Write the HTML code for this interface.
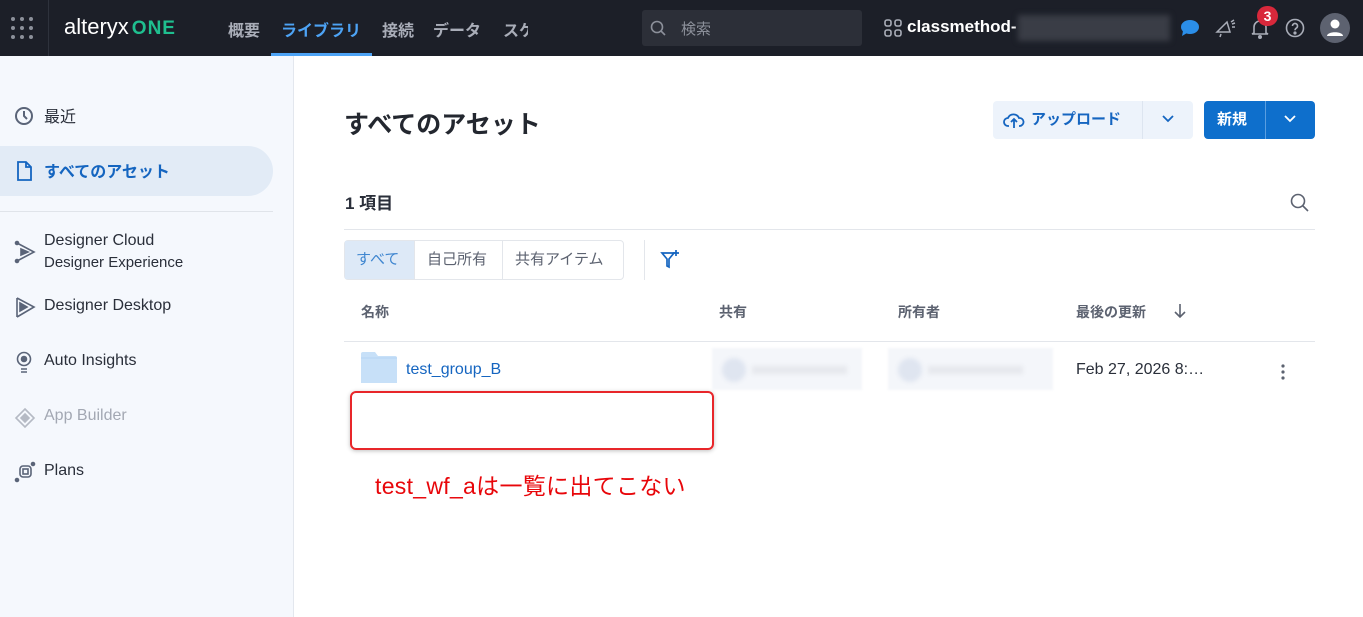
<!DOCTYPE html>
<html><head><meta charset="utf-8"><style>
*{box-sizing:border-box;margin:0;padding:0}
body{width:1363px;height:617px;overflow:hidden;background:#fff;font-family:"Liberation Sans","Noto Sans CJK JP",sans-serif;color:#2a2f3a;position:relative}
.hdr{position:absolute;left:0;top:0;width:1363px;height:56px;background:#1c1f28}
.abs{position:absolute}
.nav{color:#a9adb8;font-size:16px;font-weight:bold;top:17px}
.side{position:absolute;left:0;top:56px;width:294px;height:561px;background:#f5f8fd;border-right:1px solid #e3e7ee}
.si{position:absolute;left:44px;font-size:16px;color:#2a2f3a}
.ic{position:absolute;left:14px}
.th{position:absolute;top:302px;font-size:14px;font-weight:bold;color:#5c6270}
.blur{position:absolute;top:348px;height:42px;background:#f4f6fa;filter:blur(1px)}
</style></head><body>
<div class="hdr">
  <svg class="abs" style="left:10px;top:16px" width="24" height="24"><g fill="#8c909a"><circle cx="3" cy="3" r="2"/><circle cx="12" cy="3" r="2"/><circle cx="21" cy="3" r="2"/><circle cx="3" cy="12" r="2"/><circle cx="12" cy="12" r="2"/><circle cx="21" cy="12" r="2"/><circle cx="3" cy="21" r="2"/><circle cx="12" cy="21" r="2"/><circle cx="21" cy="21" r="2"/></g></svg>
  <div class="abs" style="left:48px;top:0;width:1px;height:56px;background:#2e323c"></div>
  <div class="abs" style="left:64px;top:14px;font-size:22px;color:#fff">alteryx<span style="color:#1fbf8f;font-weight:bold;font-size:19px;letter-spacing:1px;margin-left:3px">ONE</span></div>
  <div class="abs nav" style="left:228px">概要</div>
  <div class="abs nav" style="left:281px;color:#4da3f5">ライブラリ</div>
  <div class="abs" style="left:271px;top:53px;width:101px;height:3px;background:#4da3f5"></div>
  <div class="abs nav" style="left:382px">接続</div>
  <div class="abs nav" style="left:433px">データ</div>
  <div class="abs nav" style="left:503px;width:25px;overflow:hidden;white-space:nowrap">スケ</div>
  <div class="abs" style="left:642px;top:10px;width:220px;height:36px;background:#2c2f38;border-radius:3px"></div>
  <svg class="abs" style="left:650px;top:20px" width="16" height="16" fill="none" stroke="#8c909a" stroke-width="1.6"><circle cx="7" cy="7" r="5.5"/><path d="M11 11l4 4"/></svg>
  <div class="abs" style="left:681px;top:18px;color:#8c909a;font-size:15px">検索</div>
  <svg class="abs" style="left:884px;top:19px" width="18" height="18" fill="none" stroke="#a9adb8" stroke-width="1.6"><rect x="1" y="1" width="6" height="6" rx="2"/><rect x="11" y="1" width="6" height="6" rx="2"/><rect x="1" y="11" width="6" height="6" rx="2"/><rect x="11" y="11" width="6" height="6" rx="2"/></svg>
  <div class="abs" style="left:907px;top:17px;color:#fff;font-weight:bold;font-size:17px">classmethod-</div>
  <div class="abs" style="left:1018px;top:15px;width:152px;height:26px;background:#3a3d46;filter:blur(3px)"></div>
  <svg class="abs" style="left:1180px;top:19px" width="20" height="18"><ellipse cx="10" cy="8" rx="9" ry="7" fill="#2b8ee8"/><path d="M3 12l-1 5 5-3z" fill="#2b8ee8"/></svg>
  <svg class="abs" style="left:1215px;top:18px" width="22" height="20" fill="none" stroke="#a9adb8" stroke-width="1.5"><path d="M2 14l10-10 3 10z"/><path d="M6 16l-1 3M16 4l3-2M17 9h3M17 6l3-1"/></svg>
  <svg class="abs" style="left:1250px;top:17px" width="20" height="22" fill="none" stroke="#a9adb8" stroke-width="1.6"><path d="M4 16V10a6 6 0 0112 0v6l2 1H2z"/><circle cx="10" cy="20" r="1.2" fill="#a9adb8"/></svg>
  <div class="abs" style="left:1257px;top:6px;width:21px;height:20px;border-radius:10px;background:#d8283b;color:#fff;font-weight:bold;font-size:14px;text-align:center;line-height:20px">3</div>
  <svg class="abs" style="left:1285px;top:18px" width="20" height="20" fill="none" stroke="#a9adb8" stroke-width="1.6"><circle cx="10" cy="10" r="8.5"/><path d="M7.5 8a2.5 2.5 0 114 2c-1 .7-1.5 1-1.5 2.3"/><circle cx="10" cy="15" r=".8" fill="#a9adb8"/></svg>
  <div class="abs" style="left:1320px;top:13px;width:30px;height:30px;border-radius:15px;background:#5d6270"></div>
  <svg class="abs" style="left:1320px;top:13px" width="30" height="30" fill="#fff"><circle cx="15" cy="11" r="4.5"/><path d="M7 23c0-5 16-5 16 0z"/></svg>
</div>

<div class="side">
  <svg class="ic" style="top:50px" width="20" height="20" fill="none" stroke="#5a6478" stroke-width="2"><circle cx="10" cy="10" r="8"/><path d="M10 5v5l3 3"/></svg>
  <div class="si" style="top:47px">最近</div>
  <div class="abs" style="left:0;top:90px;width:273px;height:50px;background:#e2ebf6;border-radius:0 25px 25px 0"></div>
  <svg class="ic" style="top:105px;left:16px" width="16" height="20" fill="none" stroke="#1565c0" stroke-width="1.8"><path d="M2 1h8l5 5v13H2z"/><path d="M10 1v5h5"/></svg>
  <div class="si" style="top:102px;color:#1565c0;font-weight:bold">すべてのアセット</div>
  <div class="abs" style="left:0;top:155px;width:273px;height:1px;background:#e0e4ea"></div>
  <svg class="ic" style="top:184px" width="22" height="24" fill="none" stroke="#5a6478" stroke-width="1.6"><path d="M3 3l17 9-17 9"/><path d="M7 9l7 3-7 3z" fill="#5a6478"/><circle cx="3" cy="3" r="1.5" fill="#5a6478"/><circle cx="3" cy="21" r="1.5" fill="#5a6478"/></svg>
  <div class="si" style="top:176px">Designer Cloud</div>
  <div class="si" style="top:198px;font-size:15px">Designer Experience</div>
  <svg class="ic" style="top:240px" width="22" height="22" fill="none" stroke="#5a6478" stroke-width="1.6"><path d="M3 2v19M3 2l17 9-17 10"/><path d="M6 7l7 4-7 4z" fill="#5a6478"/></svg>
  <div class="si" style="top:241px">Designer Desktop</div>
  <svg class="ic" style="top:295px;left:16px" width="18" height="22" fill="none" stroke="#5a6478" stroke-width="1.6"><circle cx="8" cy="8" r="6.5"/><circle cx="8" cy="8" r="2.5" fill="#5a6478"/><path d="M5 18h6M5 21h6"/></svg>
  <div class="si" style="top:296px">Auto Insights</div>
  <svg class="ic" style="top:351px" width="22" height="22" fill="none" stroke="#b5bac4" stroke-width="1.6"><path d="M11 2l9 9-9 9-9-9z"/><path d="M11 7l4 4-4 4-4-4z" fill="#b5bac4"/></svg>
  <div class="si" style="top:351px;color:#a3a8b3">App Builder</div>
  <svg class="ic" style="top:405px" width="22" height="22" fill="none" stroke="#5a6478" stroke-width="1.6"><rect x="6" y="5" width="11" height="11" rx="3"/><rect x="9" y="8" width="5" height="5"/><circle cx="3" cy="19" r="1.5" fill="#5a6478"/><circle cx="19" cy="3" r="1.5" fill="#5a6478"/></svg>
  <div class="si" style="top:406px">Plans</div>
</div>

<div class="abs" style="left:344px;top:105px;font-size:25px;font-weight:bold;color:#23272f">すべてのアセット</div>
<div class="abs" style="left:993px;top:101px;width:200px;height:38px;background:#edf3fb;border-radius:4px"></div>
<div class="abs" style="left:1142px;top:101px;width:1px;height:38px;background:#dde5f0"></div>
<svg class="abs" style="left:1003px;top:110px" width="22" height="20" fill="none" stroke="#1565c0" stroke-width="1.8"><path d="M6 16H5a4 4 0 010-8 6 6 0 0111 0 4 4 0 011 8h-1"/><path d="M11 18V9M8 12l3-3 3 3"/></svg>
<div class="abs" style="left:1031px;top:108px;font-size:15px;font-weight:bold;color:#1565c0">アップロード</div>
<svg class="abs" style="left:1162px;top:115px" width="12" height="8" fill="none" stroke="#1565c0" stroke-width="1.8"><path d="M1 1l5 5 5-5"/></svg>
<div class="abs" style="left:1204px;top:101px;width:111px;height:38px;background:#0e6fcc;border-radius:4px"></div>
<div class="abs" style="left:1265px;top:101px;width:1px;height:38px;background:#5a9ee0"></div>
<div class="abs" style="left:1217px;top:108px;font-size:15px;font-weight:bold;color:#fff">新規</div>
<svg class="abs" style="left:1284px;top:115px" width="12" height="8" fill="none" stroke="#fff" stroke-width="1.8"><path d="M1 1l5 5 5-5"/></svg>

<div class="abs" style="left:345px;top:189px;font-size:17px;font-weight:bold;color:#2a2f3a">1 項目</div>
<svg class="abs" style="left:1290px;top:193px" width="20" height="20" fill="none" stroke="#5c6270" stroke-width="1.6"><circle cx="8" cy="8" r="6.5"/><path d="M13 13l5 5"/></svg>
<div class="abs" style="left:344px;top:229px;width:971px;height:1px;background:#e3e6eb"></div>

<div class="abs" style="left:344px;top:240px;width:280px;height:40px;border:1px solid #e3e6eb;border-radius:4px"></div>
<div class="abs" style="left:345px;top:241px;width:69px;height:38px;background:#dde9f7"></div>
<div class="abs" style="left:414px;top:241px;width:1px;height:38px;background:#e3e6eb"></div>
<div class="abs" style="left:502px;top:241px;width:1px;height:38px;background:#e3e6eb"></div>
<div class="abs" style="left:356px;top:248px;font-size:15px;color:#3f86d0">すべて</div>
<div class="abs" style="left:427px;top:248px;font-size:15px;color:#5c6270">自己所有</div>
<div class="abs" style="left:515px;top:248px;font-size:15px;color:#5c6270">共有アイテム</div>
<div class="abs" style="left:644px;top:240px;width:1px;height:40px;background:#e3e6eb"></div>
<svg class="abs" style="left:660px;top:249px" width="22" height="22" fill="none" stroke="#1565c0" stroke-width="1.7"><path d="M2 4h12l-5 6v8l-2-1v-7z"/><path d="M16 1v6M13 4h6"/></svg>

<div class="th" style="left:361px">名称</div>
<div class="th" style="left:719px">共有</div>
<div class="th" style="left:898px">所有者</div>
<div class="th" style="left:1076px">最後の更新</div>
<svg class="abs" style="left:1173px;top:303px" width="14" height="16" fill="none" stroke="#5c6270" stroke-width="1.6"><path d="M7 1v13M2 9l5 5 5-5"/></svg>
<div class="abs" style="left:344px;top:341px;width:971px;height:1px;background:#e3e6eb"></div>

<svg class="abs" style="left:361px;top:352px" width="36" height="31"><path d="M0 2a2 2 0 012-2h12l3 4h17a2 2 0 012 2v25H0z" fill="#c7e0f8"/><path d="M0 6h36" stroke="#b4d4f3" stroke-width="1"/></svg>
<div class="abs" style="left:406px;top:361px;font-size:16px;color:#1565c0">test_group_B</div>
<div class="blur" style="left:712px;width:150px"></div>
<div class="abs" style="left:722px;top:358px;width:24px;height:24px;border-radius:12px;background:#dfe5f0;filter:blur(2px)"></div>
<div class="abs" style="left:752px;top:366px;width:95px;height:8px;background:#e6e8ed;filter:blur(2px)"></div>
<div class="blur" style="left:888px;width:165px"></div>
<div class="abs" style="left:898px;top:358px;width:24px;height:24px;border-radius:12px;background:#dfe5f0;filter:blur(2px)"></div>
<div class="abs" style="left:928px;top:366px;width:95px;height:8px;background:#e6e8ed;filter:blur(2px)"></div>
<div class="abs" style="left:1076px;top:361px;font-size:16px;color:#2a2f3a">Feb 27, 2026 8:…</div>
<svg class="abs" style="left:1280px;top:363px" width="6" height="18" fill="#5c6270"><circle cx="3" cy="3" r="1.6"/><circle cx="3" cy="9" r="1.6"/><circle cx="3" cy="15" r="1.6"/></svg>

<div class="abs" style="left:350px;top:391px;width:364px;height:59px;border:2px solid #e8262a;border-radius:6px;box-shadow:0 1px 4px rgba(0,0,0,.25)"></div>
<div class="abs" style="left:375px;top:467px;font-size:23px;color:#e8060a;letter-spacing:0.3px">test_wf_aは一覧に出てこない</div>
</body></html>
